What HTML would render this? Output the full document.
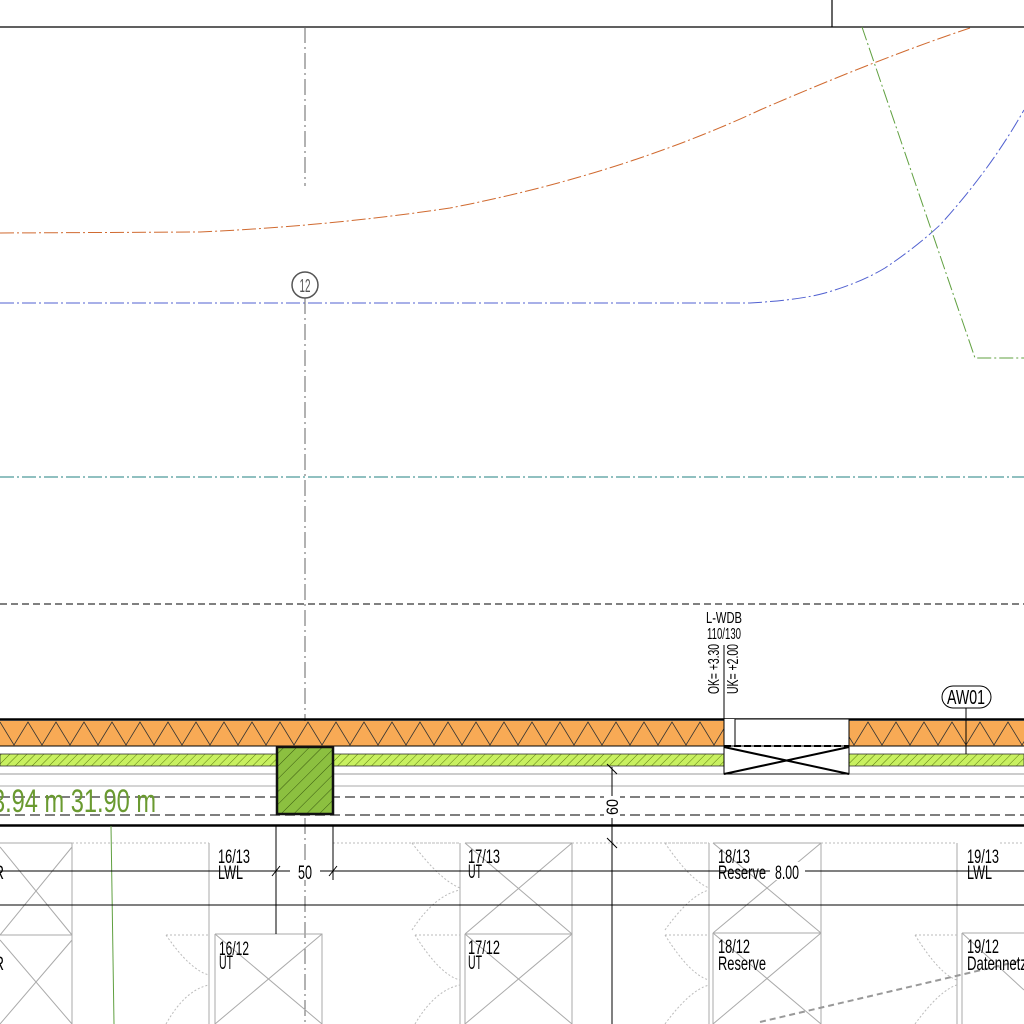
<!DOCTYPE html>
<html><head><meta charset="utf-8"><style>html,body{margin:0;padding:0;background:#fff}svg{display:block}text{font-family:"Liberation Sans Narrow","Liberation Sans",sans-serif}</style></head><body>
<svg width="1024" height="1024" viewBox="0 0 1024 1024" xmlns="http://www.w3.org/2000/svg">
<defs>
<pattern id="h" width="6" height="6" patternUnits="userSpaceOnUse" patternTransform="rotate(45)"><rect width="6" height="6" fill="#c8f060"/><line x1="0" y1="0" x2="0" y2="6" stroke="#5a7a10" stroke-width="1"/></pattern>
<pattern id="h2" width="9" height="9" patternUnits="userSpaceOnUse" patternTransform="rotate(45)"><rect width="9" height="9" fill="#8cc040"/><line x1="0" y1="0" x2="0" y2="9" stroke="#3a5a10" stroke-width="1"/></pattern>
</defs>
<rect width="1024" height="1024" fill="#fff"/>
<line x1="0" y1="27" x2="1024" y2="27" stroke="#000" stroke-width="1.2"/>
<line x1="832" y1="0" x2="832" y2="27" stroke="#000" stroke-width="1.2"/>
<path d="M0,233 L200,232 Q330,226 450,208 Q620,175 760,110 Q880,58 970,28" fill="none" stroke="#d06a30" stroke-width="1" stroke-dasharray="14,3,2,3"/>
<path d="M0,303 L750,303 Q800,300 825,293 Q860,283 885,268 Q915,248 940,225 Q990,170 1024,110" fill="none" stroke="#5060d0" stroke-width="1" stroke-dasharray="14,3,2,3"/>
<path d="M862,27 L975,358 L1024,358" fill="none" stroke="#60a040" stroke-width="1" stroke-dasharray="14,3,2,3"/>
<line x1="0" y1="477" x2="1024" y2="477" stroke="#208080" stroke-width="1" stroke-dasharray="14,3,2,3"/>
<line x1="0" y1="604" x2="1024" y2="604" stroke="#000" stroke-width="1" stroke-dasharray="7,4"/>
<line x1="305" y1="27" x2="305" y2="186" stroke="#666" stroke-width="1" stroke-dasharray="16,4,2,4"/>
<line x1="305" y1="298" x2="305" y2="1024" stroke="#666" stroke-width="1" stroke-dasharray="16,4,2,4"/>
<circle cx="305" cy="285" r="13" fill="#fff" stroke="#555" stroke-width="1.5"/>
<text x="305" y="292" font-size="18" fill="#555" text-anchor="middle" textLength="11" lengthAdjust="spacingAndGlyphs">12</text>
<rect x="0" y="721" width="1024" height="25" fill="#f8aa55"/>
<line x1="0" y1="719.5" x2="1024" y2="719.5" stroke="#000" stroke-width="2.5"/>
<line x1="0" y1="746" x2="1024" y2="746" stroke="#000" stroke-width="1"/>
<path d="M0,722 L14,745 L28,722 L42,745 L56,722 L70,745 L84,722 L98,745 L112,722 L126,745 L140,722 L154,745 L168,722 L182,745 L196,722 L210,745 L224,722 L238,745 L252,722 L266,745 L280,722 L294,745 L308,722 L322,745 L336,722 L350,745 L364,722 L378,745 L392,722 L406,745 L420,722 L434,745 L448,722 L462,745 L476,722 L490,745 L504,722 L518,745 L532,722 L546,745 L560,722 L574,745 L588,722 L602,745 L616,722 L630,745 L644,722 L658,745 L672,722 L686,745 L700,722 L714,745 L728,722 L742,745 L756,722 L770,745 L784,722 L798,745 L812,722 L826,745 L840,722 L854,745 L868,722 L882,745 L896,722 L910,745 L924,722 L938,745 L952,722 L966,745 L980,722 L994,745 L1008,722 L1022,745 L1036,722" fill="none" stroke="#333" stroke-width="0.8"/>
<rect x="0" y="754" width="1024" height="12" fill="url(#h)" stroke="#333" stroke-width="0.8"/>
<line x1="0" y1="774" x2="1024" y2="774" stroke="#999" stroke-width="1"/>
<line x1="0" y1="786" x2="1024" y2="786" stroke="#aaa" stroke-width="1"/>
<line x1="0" y1="797" x2="1024" y2="797" stroke="#555" stroke-width="1.5" stroke-dasharray="10,5"/>
<line x1="0" y1="815" x2="1024" y2="815" stroke="#555" stroke-width="1.5" stroke-dasharray="10,5"/>
<line x1="0" y1="825.5" x2="1024" y2="825.5" stroke="#000" stroke-width="2.5"/>
<rect x="724" y="719" width="125" height="56" fill="#fff"/>
<rect x="735" y="719" width="114" height="27" fill="#fff" stroke="#000" stroke-width="1"/>
<rect x="724" y="746" width="125" height="28" fill="#fff" stroke="#000" stroke-width="1"/>
<line x1="724" y1="746" x2="849" y2="746" stroke="#000" stroke-width="2" stroke-dasharray="7,3"/>
<path d="M724,747 L849,774 M724,774 L849,747" stroke="#000" stroke-width="2"/>
<line x1="724" y1="645" x2="724" y2="746" stroke="#000" stroke-width="1"/>
<text x="724" y="623" font-size="16" text-anchor="middle" textLength="36" lengthAdjust="spacingAndGlyphs">L-WDB</text>
<text x="724" y="639" font-size="16" text-anchor="middle" textLength="34" lengthAdjust="spacingAndGlyphs">110/130</text>
<text transform="translate(719,694) rotate(-90)" font-size="16" textLength="50" lengthAdjust="spacingAndGlyphs">OK= +3.30</text>
<text transform="translate(738,694) rotate(-90)" font-size="16" textLength="50" lengthAdjust="spacingAndGlyphs">UK= +2.00</text>
<rect x="942" y="686" width="49" height="22" rx="11" fill="#fff" stroke="#000" stroke-width="1"/>
<text x="966" y="704" font-size="20" text-anchor="middle" textLength="38" lengthAdjust="spacingAndGlyphs">AW01</text>
<line x1="966" y1="708" x2="966" y2="754" stroke="#000" stroke-width="1"/>
<rect x="277" y="747" width="56" height="67" fill="url(#h2)" stroke="#111" stroke-width="2.5"/>
<text x="-8" y="812" font-size="32" fill="#6a9a30" textLength="164" lengthAdjust="spacingAndGlyphs">3.94 m  31.90 m</text>
<g stroke="#aaa" stroke-width="1" fill="none">
<path d="M0,843 H72 V1024 M0,935 H72 M0,847 L72,935 M0,935 L72,847 M0,940 L72,1024 M0,1024 L72,940"/>
<path d="M209,843 V1024 M215,934 H322 V1024 M215,934 V1024 M215,934 L322,1024 M215,1024 L322,934"/>
<path d="M460,843 V1024 M465,843 H572 V1024 M465,934 H572 M465,843 L572,934 M465,934 L572,843 M465,934 V1024 M465,934 L572,1024 M465,1024 L572,934"/>
<path d="M709,843 V1024 M713,843 H821 V1024 M713,933 H821 M713,843 L821,933 M713,933 L821,843 M713,933 V1024 M713,933 L821,1024 M713,1024 L821,933"/>
<path d="M957,843 V1024 M962,933 H1024 M962,933 V1024 M962,933 L1024,990"/>
</g>
<g stroke="#bbb" stroke-width="1" fill="none" stroke-dasharray="2,2">
<path d="M72,843 H209 M333,843 H460 M572,843 H709 M821,843 H957 M1000,843 H1024"/>
<path d="M166,935 H209 M166,935 Q190,970 209,975 M166,1024 Q185,990 209,985"/>
<path d="M415,935 H460 M415,935 Q440,975 460,980 M415,1024 Q435,990 460,985"/>
<path d="M412,843 H460 M412,843 Q440,880 460,888 M412,930 Q435,895 460,890"/>
<path d="M665,843 H709 M665,843 Q690,880 709,888 M665,930 Q690,895 709,890"/>
<path d="M665,935 H709 M665,935 Q690,975 709,980 M665,1024 Q690,990 709,985"/>
<path d="M915,935 H957 M915,935 Q940,975 957,980 M915,1024 Q940,990 957,985"/>
</g>
<path d="M760,1022 L1024,960" stroke="#999" stroke-width="2" stroke-dasharray="6,4"/>
<line x1="111" y1="826" x2="114" y2="1024" stroke="#60a040" stroke-width="1"/>
<line x1="0" y1="871" x2="1024" y2="871" stroke="#000" stroke-width="1"/>
<line x1="0" y1="905" x2="1024" y2="905" stroke="#000" stroke-width="1"/>
<line x1="612" y1="767" x2="612" y2="1024" stroke="#000" stroke-width="1"/>
<path d="M607,764 L617,774 M607,838 L617,848" stroke="#000" stroke-width="1"/>
<line x1="276" y1="826" x2="276" y2="934" stroke="#000" stroke-width="1"/>
<line x1="333" y1="826" x2="333" y2="880" stroke="#000" stroke-width="1"/>
<path d="M272,876 L280,866 M329,876 L337,866" stroke="#000" stroke-width="1"/>
<rect x="290" y="860" width="30" height="20" fill="#fff"/>
<text x="305" y="879" font-size="19" text-anchor="middle" textLength="14" lengthAdjust="spacingAndGlyphs">50</text>
<rect x="604" y="796" width="16" height="22" fill="#fff"/>
<text transform="translate(618,815) rotate(-90)" font-size="17" textLength="16" lengthAdjust="spacingAndGlyphs">60</text>
<rect x="770" y="862" width="35" height="18" fill="#fff"/>
<g font-size="19" fill="#000">
<text x="218" y="863" textLength="32" lengthAdjust="spacingAndGlyphs">16/13</text>
<text x="218" y="879" textLength="25" lengthAdjust="spacingAndGlyphs">LWL</text>
<text x="219" y="955" textLength="30" lengthAdjust="spacingAndGlyphs">16/12</text>
<text x="219" y="969" textLength="14" lengthAdjust="spacingAndGlyphs">UT</text>
<text x="468" y="863" textLength="32" lengthAdjust="spacingAndGlyphs">17/13</text>
<text x="468" y="878" textLength="14" lengthAdjust="spacingAndGlyphs">UT</text>
<text x="468" y="954" textLength="32" lengthAdjust="spacingAndGlyphs">17/12</text>
<text x="468" y="969" textLength="14" lengthAdjust="spacingAndGlyphs">UT</text>
<text x="718" y="863" textLength="32" lengthAdjust="spacingAndGlyphs">18/13</text>
<text x="718" y="879" textLength="48" lengthAdjust="spacingAndGlyphs">Reserve</text>
<text x="775" y="879" textLength="24" lengthAdjust="spacingAndGlyphs">8.00</text>
<text x="718" y="953" textLength="32" lengthAdjust="spacingAndGlyphs">18/12</text>
<text x="718" y="970" textLength="48" lengthAdjust="spacingAndGlyphs">Reserve</text>
<text x="967" y="863" textLength="32" lengthAdjust="spacingAndGlyphs">19/13</text>
<text x="967" y="879" textLength="25" lengthAdjust="spacingAndGlyphs">LWL</text>
<text x="967" y="953" textLength="32" lengthAdjust="spacingAndGlyphs">19/12</text>
<text x="967" y="970" textLength="60" lengthAdjust="spacingAndGlyphs">Datennetz</text>
<text x="-6" y="879" textLength="10" lengthAdjust="spacingAndGlyphs">R</text>
<text x="-6" y="970" textLength="10" lengthAdjust="spacingAndGlyphs">R</text>
</g>
</svg>
</body></html>
